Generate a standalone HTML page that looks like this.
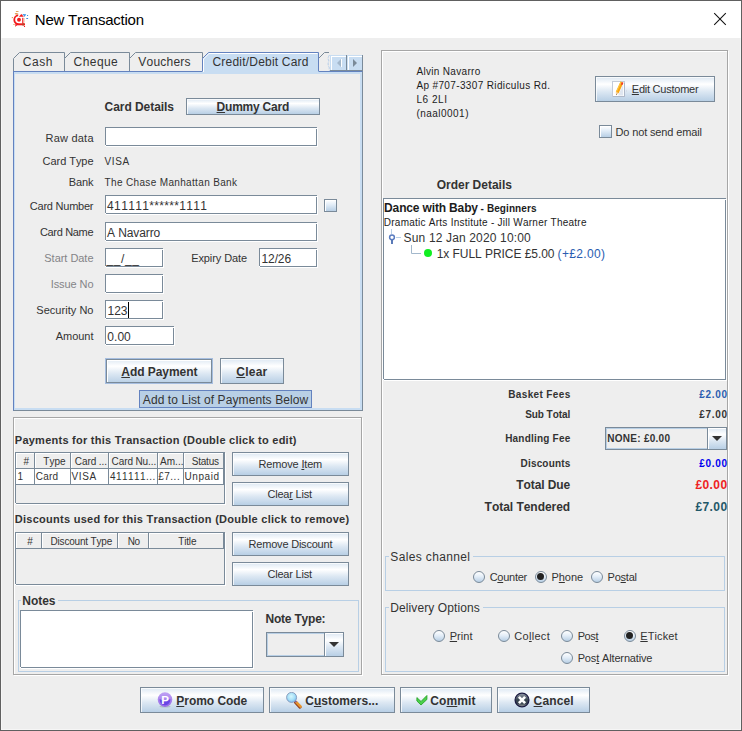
<!DOCTYPE html><html><head><meta charset="utf-8"><title>New Transaction</title><style>
html,body{margin:0;padding:0;}
body{width:742px;height:731px;overflow:hidden;background:#eee;font-family:"Liberation Sans",sans-serif;color:#333;font-kerning:none;font-feature-settings:"kern" 0,"liga" 0;}
#win{position:absolute;left:0;top:0;width:742px;height:731px;background:#eee;overflow:hidden;}
#win>*{position:absolute;}
#win>div{box-sizing:border-box;}
.a{position:absolute;display:block;}
.t{position:absolute;line-height:1;white-space:nowrap;}
.t u{text-decoration:underline;text-underline-offset:1px;text-decoration-thickness:1px;}
.btn{border:1px solid #7a8a99;background:linear-gradient(#dde8f3 0%,#fff 30%,#dde8f3 60%,#b8cfe5 100%);box-shadow:inset 1px 1px 0 rgba(255,255,255,.75);}
.dflt{border:1px solid #a6bee0;box-shadow:inset 0 0 0 1px #7a8a99, inset 2px 2px 0 #fff;}
.sbtn{border-right:1px solid #7a8a99;border-bottom:1px solid #7a8a99;background:#c8ddf2;box-shadow:inset 1px 1px 0 #c8ddf2, inset 2px 2px 0 #fff;}
.fld{border:1px solid #7a8a99;background:#fff;box-shadow:1px 1px 0 #fff;}
.chk{border:1px solid #7a8a99;background:linear-gradient(#fff 0%,#e4eef8 40%,#b8cfe5 100%);box-shadow:inset 1px 1px 0 #fff;}
.rad{border:1px solid #7a8a99;border-radius:50%;background:linear-gradient(#fff 0%,#e4eef8 45%,#b8cfe5 100%);}
.etch{border:1px solid #a6a6a6;box-shadow:inset 1px 1px 0 #fff, 1px 1px 0 #fff;}
.sp{border:1px solid #7a8a99;box-shadow:1px 1px 0 #fff;}
.th{border-right:1px solid #7a8a99;border-bottom:1px solid #7a8a99;box-shadow:inset 1px 1px 0 #fff;background:#eee;}
.combo{border:1px solid #7a8a99;background:#eee;box-shadow:inset 0 0 0 1px #b8cfe5;}
.cbtn{border-left:1px solid #7a8a99;background:linear-gradient(#dde8f3 0%,#fff 30%,#dde8f3 60%,#b8cfe5 100%);box-shadow:inset 1px 1px 0 #fff;}
</style></head><body><div id="win">
<div class="" style="left:0px;top:0px;width:742px;height:731px;border:1px solid #606060;box-shadow:inset 0 0 0 1px #f6f6f6"></div>
<div class="" style="left:1px;top:1px;width:740px;height:37px;background:#fff"></div>
<svg class="a" style="left:8px;top:6px" width="26" height="26" viewBox="0 0 26 26">
<path d="M10.2 9.4 A4 4.4 0 0 0 10.4 18.2" fill="none" stroke="#f21a1a" stroke-width="1.8"/>
<rect x="7.6" y="17.3" width="9.4" height="2" fill="#f21a1a"/>
<rect x="14.2" y="11.8" width="1.2" height="5.6" fill="#f21a1a"/>
<circle cx="11" cy="13.8" r="1.95" fill="#f21a1a"/>
<path d="M13.3 7.9 L15.9 10.8 L10.9 10.8Z" fill="#f21a1a"/>
<path d="M14.3 8 L18.2 8.2 L16.6 10.9 L15.6 9.6Z" fill="#2f8fe6" opacity=".9"/>
<rect x="19" y="9" width="1.1" height="1" fill="#3f8fe0"/>
<rect x="18.3" y="12" width="1.8" height=".9" fill="#2f7fd8"/>
<rect x="16.2" y="12" width=".8" height="4.6" fill="#f0c8a0" opacity=".8"/>
<rect x="7.9" y="5" width="2.6" height=".9" fill="#d9892e" opacity=".85"/>
<path d="M6.8 7.2 L9 6.9 L10.6 8 L9.2 8.8 L7 8.2Z" fill="#d9802a" opacity=".85"/>
<rect x="3.8" y="11" width="1.1" height="1.1" fill="#d98a30" opacity=".9"/>
<rect x="5" y="18.1" width="2" height=".8" fill="#e0a050" opacity=".8"/>
<rect x="7" y="20" width=".9" height=".9" fill="#e09a40" opacity=".8"/>
<rect x="7" y="18.4" width="2" height="1.6" fill="#f03050" opacity=".8"/>
<path d="M14.2 17.5 L16 17.2 L16 19.4 L14.4 19.6Z" fill="#b04a28"/>
<circle cx="16.5" cy="20.4" r=".6" fill="#f21a1a"/>
</svg>
<span class="t" style="top:12px;font-size:15px;color:#000;letter-spacing:-0.239px;left:34.8px;">New Transaction</span>
<svg class="a" style="left:713px;top:12px" width="14" height="14" viewBox="0 0 14 14"><path d="M1.2 1.2 L12.8 12.8 M12.8 1.2 L1.2 12.8" stroke="#111" stroke-width="1.05" fill="none"/></svg>
<div class="" style="left:13px;top:71px;width:350px;height:340px;box-sizing:border-box;border-left:1px solid #6382bf;border-top:1px solid #6382bf;border-right:1px solid #7a8a99;border-bottom:1px solid #7a8a99;"></div>
<div class="" style="left:14px;top:72px;width:348px;height:338px;box-sizing:border-box;border:2px solid #c8ddf2;border-left-width:1px;"></div>
<svg class="a" style="left:0;top:0" width="372" height="80" viewBox="0 0 372 80"><path d="M13.5 71 L13.5 58.5 L19.5 52.5 L64.5 52.5 L64.5 71Z" fill="#eeeeee" stroke="none"/><path d="M13.5 71 L13.5 58.5 L19.5 52.5 L64.5 52.5 L64.5 71" fill="none" stroke="#7a8a99" stroke-width="1"/><path d="M64.5 71 L64.5 58.5 L70.5 52.5 L129.5 52.5 L129.5 71Z" fill="#eeeeee" stroke="none"/><path d="M64.5 71 L64.5 58.5 L70.5 52.5 L129.5 52.5 L129.5 71" fill="none" stroke="#7a8a99" stroke-width="1"/><path d="M129.5 71 L129.5 58.5 L135.5 52.5 L202.5 52.5 L202.5 71Z" fill="#eeeeee" stroke="none"/><path d="M129.5 71 L129.5 58.5 L135.5 52.5 L202.5 52.5 L202.5 71" fill="none" stroke="#7a8a99" stroke-width="1"/><path d="M318.5 71 L318.5 58.5 L324.5 52.5 L329.5 52.5 L329.5 71Z" fill="#eeeeee" stroke="none"/><path d="M318.5 58.5 L324.5 52.5 L329 52.5" fill="none" stroke="#7a8a99" stroke-width="1"/><path d="M202.5 74 L202.5 58.5 L208.5 52.5 L318.5 52.5 L318.5 74Z" fill="#c8ddf2" stroke="none"/><path d="M202.5 71 L202.5 58.5 L208.5 52.5 L318.5 52.5 L318.5 71" fill="none" stroke="#6382bf" stroke-width="1"/><path d="M203.5 72 L203.5 59 L209 53.5 L317.5 53.5" fill="none" stroke="#fff" stroke-width="1"/></svg>
<span class="t" style="top:56px;font-size:12px;letter-spacing:0.561px;left:22.8px;">Cash</span>
<span class="t" style="top:56px;font-size:12px;letter-spacing:0.431px;left:73.6px;">Cheque</span>
<span class="t" style="top:56px;font-size:12px;letter-spacing:0.214px;left:138.3px;">Vouchers</span>
<span class="t" style="top:56px;font-size:12px;letter-spacing:0.206px;left:212.5px;">Credit/Debit Card</span>
<svg class="a" style="left:326px;top:52px" width="6" height="20" viewBox="0 0 6 20"><path d="M3.5 3 Q1 6 3 9 Q1 12 3.5 16 Q2.5 18 4 19" fill="none" stroke="#b4cdea" stroke-width="1" stroke-dasharray="3 1"/></svg>
<div class="sbtn" style="left:330px;top:55px;width:17px;height:16px;"></div>
<div class="sbtn" style="left:347px;top:55px;width:16px;height:16px;"></div>
<svg class="a" style="left:331px;top:55px" width="32" height="16" viewBox="0 0 32 16"><path d="M10 4 L10 12 L6 8Z" fill="#a3b8cc"/><rect x="10" y="4" width="1" height="8" fill="#fff"/><path d="M22 4 L22 12 L26 8Z" fill="#7a8a99"/></svg>
<span class="t" style="top:101px;font-size:12px;font-weight:bold;letter-spacing:-0.057px;left:104.6px;">Card Details</span>
<div class="btn" style="left:186px;top:98px;width:134px;height:17px;"></div>
<span class="t" style="top:101px;font-size:12px;font-weight:bold;letter-spacing:-0.223px;left:216.6px;"><u>D</u>ummy Card</span>
<span class="t" style="top:133px;font-size:11px;letter-spacing:0.202px;right:648.3px;">Raw data</span>
<div class="fld" style="left:105px;top:127px;width:212px;height:19px;"></div>
<div class="" style="left:316px;top:128px;width:1px;height:1px;background:#fff"></div>
<div class="" style="left:105px;top:145px;width:1px;height:1px;background:#fff"></div>
<span class="t" style="top:156px;font-size:11px;letter-spacing:-0.057px;right:648.56px;">Card Type</span>
<span class="t" style="top:157px;font-size:10px;letter-spacing:0.568px;left:104.6px;">VISA</span>
<span class="t" style="top:177px;font-size:11px;letter-spacing:-0.093px;right:648.59px;">Bank</span>
<span class="t" style="top:178px;font-size:10px;letter-spacing:0.342px;left:104.6px;">The Chase Manhattan Bank</span>
<span class="t" style="top:201px;font-size:11px;letter-spacing:-0.233px;right:648.73px;">Card Number</span>
<div class="fld" style="left:105px;top:195px;width:212px;height:19px;"></div>
<div class="" style="left:316px;top:196px;width:1px;height:1px;background:#fff"></div>
<div class="" style="left:105px;top:213px;width:1px;height:1px;background:#fff"></div>
<span class="t" style="top:200px;font-size:12px;letter-spacing:0.342px;left:107.1px;">411111******1111</span>
<div class="chk" style="left:324px;top:199px;width:13px;height:13px;"></div>
<span class="t" style="top:227px;font-size:11px;letter-spacing:-0.331px;right:648.83px;">Card Name</span>
<div class="fld" style="left:105px;top:222px;width:212px;height:19px;"></div>
<div class="" style="left:316px;top:223px;width:1px;height:1px;background:#fff"></div>
<div class="" style="left:105px;top:240px;width:1px;height:1px;background:#fff"></div>
<span class="t" style="top:227px;font-size:12px;letter-spacing:-0.116px;left:107.1px;">A Navarro</span>
<span class="t" style="top:253px;font-size:11px;color:#848488;letter-spacing:-0.037px;right:648.54px;">Start Date</span>
<div class="fld" style="left:105px;top:248px;width:58px;height:19px;"></div>
<div class="" style="left:162px;top:249px;width:1px;height:1px;background:#fff"></div>
<div class="" style="left:105px;top:266px;width:1px;height:1px;background:#fff"></div>
<span class="t" style="top:253px;font-size:12px;letter-spacing:0.567px;left:106.6px;">__/__</span>
<span class="t" style="top:253px;font-size:11px;letter-spacing:-0.096px;left:191.2px;">Expiry Date</span>
<div class="fld" style="left:259px;top:248px;width:58px;height:19px;"></div>
<div class="" style="left:316px;top:249px;width:1px;height:1px;background:#fff"></div>
<div class="" style="left:259px;top:266px;width:1px;height:1px;background:#fff"></div>
<span class="t" style="top:253px;font-size:12px;letter-spacing:-0.108px;left:261.5px;">12/26</span>
<span class="t" style="top:279px;font-size:11px;color:#848488;letter-spacing:-0.089px;right:648.59px;">Issue No</span>
<div class="fld" style="left:105px;top:274px;width:58px;height:19px;"></div>
<div class="" style="left:162px;top:275px;width:1px;height:1px;background:#fff"></div>
<div class="" style="left:105px;top:292px;width:1px;height:1px;background:#fff"></div>
<span class="t" style="top:305px;font-size:11px;letter-spacing:0.034px;right:648.47px;">Security No</span>
<div class="fld" style="left:105px;top:300px;width:58px;height:19px;"></div>
<div class="" style="left:162px;top:301px;width:1px;height:1px;background:#fff"></div>
<div class="" style="left:105px;top:318px;width:1px;height:1px;background:#fff"></div>
<span class="t" style="top:305px;font-size:12px;letter-spacing:-0.066px;left:107.6px;">123</span>
<div class="" style="left:128px;top:302px;width:1px;height:16px;background:#000"></div>
<span class="t" style="top:331px;font-size:11px;letter-spacing:-0.024px;right:648.52px;">Amount</span>
<div class="fld" style="left:105px;top:326px;width:69px;height:19px;"></div>
<div class="" style="left:173px;top:327px;width:1px;height:1px;background:#fff"></div>
<div class="" style="left:105px;top:344px;width:1px;height:1px;background:#fff"></div>
<span class="t" style="top:331px;font-size:12px;letter-spacing:0.047px;left:107.3px;">0.00</span>
<div class="btn dflt" style="left:105px;top:358px;width:108px;height:26px;"></div>
<span class="t" style="top:366px;font-size:12px;font-weight:bold;letter-spacing:-0.049px;left:121.3px;"><u>A</u>dd Payment</span>
<div class="btn" style="left:220px;top:358px;width:64px;height:26px;"></div>
<span class="t" style="top:366px;font-size:12px;font-weight:bold;letter-spacing:0.217px;left:236.3px;"><u>C</u>lear</span>
<div class="" style="left:139px;top:390px;width:173px;height:18px;box-sizing:border-box;background:#b8cfe5;border:1px solid #6382bf"></div>
<span class="t" style="top:394px;font-size:12px;letter-spacing:0.095px;left:142.8px;">Add to List of Payments Below</span>
<div class="etch" style="left:13px;top:417px;width:349px;height:258px;"></div>
<span class="t" style="top:434.5px;font-size:11px;font-weight:bold;letter-spacing:0.25px;left:14.8px;">Payments for this Transaction (Double click to edit)</span>
<div class="sp" style="left:15px;top:452px;width:210px;height:52px;"></div>
<div class="" style="left:224px;top:453px;width:1px;height:1px;background:#fff"></div>
<div class="" style="left:15px;top:503px;width:1px;height:1px;background:#fff"></div>
<div class="th" style="left:16px;top:453px;width:19px;height:16px;"></div>
<span class="t" style="top:457px;font-size:10px;letter-spacing:0px;left:23.5px;">#</span>
<div class="" style="left:16px;top:469px;width:18px;height:15px;background:#fff"></div>
<div class="" style="left:34px;top:469px;width:1px;height:16px;background:#7a8a99"></div>
<span class="t" style="top:472px;font-size:10px;left:17.6px;">1</span>
<div class="th" style="left:35px;top:453px;width:36px;height:16px;"></div>
<span class="t" style="top:457px;font-size:10px;letter-spacing:-0.011px;left:43.3px;">Type</span>
<div class="" style="left:35px;top:469px;width:35px;height:15px;background:#fff"></div>
<div class="" style="left:70px;top:469px;width:1px;height:16px;background:#7a8a99"></div>
<span class="t" style="top:472px;font-size:10px;letter-spacing:0.271px;left:35.7px;">Card</span>
<div class="th" style="left:71px;top:453px;width:38px;height:16px;"></div>
<span class="t" style="top:457px;font-size:10px;letter-spacing:-0.085px;left:74.8px;">Card ...</span>
<div class="" style="left:71px;top:469px;width:37px;height:15px;background:#fff"></div>
<div class="" style="left:108px;top:469px;width:1px;height:16px;background:#7a8a99"></div>
<span class="t" style="top:472px;font-size:10px;letter-spacing:0.601px;left:71.6px;">VISA</span>
<div class="th" style="left:109px;top:453px;width:49px;height:16px;"></div>
<span class="t" style="top:457px;font-size:10px;letter-spacing:-0.109px;left:111.6px;">Card Nu...</span>
<div class="" style="left:109px;top:469px;width:48px;height:15px;background:#fff"></div>
<div class="" style="left:157px;top:469px;width:1px;height:16px;background:#7a8a99"></div>
<span class="t" style="top:472px;font-size:10px;letter-spacing:0.423px;left:110.1px;">411111...</span>
<div class="th" style="left:158px;top:453px;width:26px;height:16px;"></div>
<span class="t" style="top:457px;font-size:10px;letter-spacing:0.014px;left:160.1px;">Am...</span>
<div class="" style="left:158px;top:469px;width:25px;height:15px;background:#fff"></div>
<div class="" style="left:183px;top:469px;width:1px;height:16px;background:#7a8a99"></div>
<span class="t" style="top:472px;font-size:10px;letter-spacing:0.508px;left:158.2px;">£7...</span>
<div class="th" style="left:184px;top:453px;width:41px;height:16px;"></div>
<span class="t" style="top:457px;font-size:10px;letter-spacing:-0.232px;left:191.8px;">Status</span>
<div class="" style="left:184px;top:469px;width:40px;height:15px;background:#fff"></div>
<div class="" style="left:224px;top:469px;width:1px;height:16px;background:#7a8a99"></div>
<span class="t" style="top:472px;font-size:10px;letter-spacing:0.539px;left:184.6px;">Unpaid</span>
<div class="" style="left:16px;top:484px;width:209px;height:1px;background:#7a8a99"></div>
<div class="" style="left:223px;top:453px;width:1px;height:32px;background:#7a8a99"></div>
<div class="btn" style="left:232px;top:452px;width:117px;height:24px;"></div>
<span class="t" style="top:459px;font-size:11px;letter-spacing:-0.174px;left:258.6px;">Remove <u>I</u>tem</span>
<div class="btn" style="left:232px;top:482px;width:117px;height:24px;"></div>
<span class="t" style="top:489px;font-size:11px;letter-spacing:-0.198px;left:267.4px;">Clea<u>r</u> List</span>
<span class="t" style="top:514px;font-size:11px;font-weight:bold;letter-spacing:0.269px;left:14.8px;">Discounts used for this Transaction (Double click to remove)</span>
<div class="sp" style="left:15px;top:532px;width:210px;height:53px;"></div>
<div class="" style="left:224px;top:533px;width:1px;height:1px;background:#fff"></div>
<div class="" style="left:15px;top:584px;width:1px;height:1px;background:#fff"></div>
<div class="th" style="left:16px;top:533px;width:26px;height:16px;"></div>
<span class="t" style="top:537px;font-size:10px;letter-spacing:0px;left:27.3px;">#</span>
<div class="th" style="left:42px;top:533px;width:76px;height:16px;"></div>
<span class="t" style="top:537px;font-size:10px;letter-spacing:-0.185px;left:50.5px;">Discount Type</span>
<div class="th" style="left:118px;top:533px;width:31px;height:16px;"></div>
<span class="t" style="top:537px;font-size:10px;letter-spacing:-0.397px;left:127.7px;">No</span>
<div class="th" style="left:149px;top:533px;width:76px;height:16px;"></div>
<span class="t" style="top:537px;font-size:10px;letter-spacing:-0.177px;left:178.3px;">Title</span>
<div class="" style="left:223px;top:533px;width:1px;height:16px;background:#7a8a99"></div>
<div class="btn" style="left:232px;top:532px;width:117px;height:24px;"></div>
<span class="t" style="top:539px;font-size:11px;letter-spacing:-0.209px;left:248.6px;">Remove Discount</span>
<div class="btn" style="left:232px;top:562px;width:117px;height:24px;"></div>
<span class="t" style="top:569px;font-size:11px;letter-spacing:-0.197px;left:267.4px;">Clear List</span>
<div class="" style="left:18px;top:600px;width:341px;height:72px;box-sizing:border-box;border:1px solid #b8cfe5"></div>
<div class="" style="left:21px;top:594px;width:37px;height:14px;background:#eee"></div>
<span class="t" style="top:595px;font-size:12px;font-weight:bold;letter-spacing:-0.036px;left:22.3px;">Notes</span>
<div class="sp" style="left:20px;top:610px;width:233px;height:58px;background:#fff"></div>
<div class="" style="left:252px;top:611px;width:1px;height:1px;background:#fff"></div>
<div class="" style="left:20px;top:667px;width:1px;height:1px;background:#fff"></div>
<span class="t" style="top:612.6px;font-size:12px;font-weight:bold;letter-spacing:-0.213px;left:265.5px;">Note Type:</span>
<div class="combo" style="left:266px;top:632px;width:78px;height:25px;"></div>
<div class="cbtn" style="left:324px;top:633px;width:19px;height:23px;"></div>
<svg class="a" style="left:329px;top:642px" width="10" height="5" viewBox="0 0 10 5"><path d="M0 0 L10 0 L5 5Z" fill="#333"/></svg>
<div class="etch" style="left:381px;top:50px;width:347px;height:625px;"></div>
<span class="t" style="top:67px;font-size:10px;color:#1c1c1c;letter-spacing:0.322px;left:416.4px;">Alvin Navarro</span>
<span class="t" style="top:81px;font-size:10px;color:#1c1c1c;letter-spacing:0.363px;left:416.4px;">Ap #707-3307 Ridiculus Rd.</span>
<span class="t" style="top:95px;font-size:10px;color:#1c1c1c;letter-spacing:0.557px;left:416.4px;">L6 2LI</span>
<span class="t" style="top:109px;font-size:10px;color:#1c1c1c;letter-spacing:0.476px;left:416.4px;">(naal0001)</span>
<div class="btn" style="left:595px;top:76px;width:120px;height:26px;"></div>
<svg class="a" style="left:611px;top:80px" width="16" height="18" viewBox="0 0 16 18">
<rect x="1.5" y="1.5" width="12" height="15" fill="#fff" stroke="#c3cbd9" stroke-width="1"/>
<path d="M13.5 3 L13.5 16.5 L2 16.5" fill="none" stroke="#aeb8c8" stroke-width="1"/>
<path d="M12.2 4.5 L12.2 15.5 L7 15.5Z" fill="#dfe6f0"/>
<path d="M9.6 1.6 L12.4 2.8 L7.6 13.2 L4.8 12Z" fill="#f7a313"/>
<path d="M9.6 1.6 L10.6 2 L5.8 12.4 L4.8 12Z" fill="#ffc53a"/>
<path d="M10.9 2.2 L12.4 2.8 L11.4 5 L9.9 4.4Z" fill="#ef3030"/>
<path d="M4.8 12 L7.6 13.2 L5 15.2Z" fill="#efc99a"/>
<path d="M5.2 14 L5.9 14.4 L5 15.2Z" fill="#5a3a1a"/>
<path d="M15 9.5 L15 12.5 L16 11Z" fill="#cfd8e4"/>
</svg>
<span class="t" style="top:84px;font-size:11px;letter-spacing:-0.242px;left:631.8px;"><u>E</u>dit Customer</span>
<div class="chk" style="left:599px;top:125px;width:13px;height:13px;"></div>
<span class="t" style="top:127px;font-size:11px;letter-spacing:-0.142px;left:615.5px;">Do not send email</span>
<span class="t" style="top:179px;font-size:12px;font-weight:bold;letter-spacing:-0.015px;left:436.7px;">Order Details</span>
<div class="sp" style="left:383px;top:198px;width:343px;height:182px;background:#fff"></div>
<div class="" style="left:725px;top:199px;width:1px;height:1px;background:#fff"></div>
<div class="" style="left:383px;top:379px;width:1px;height:1px;background:#fff"></div>
<span class="t" style="top:201.6px;font-size:12px;font-weight:bold;color:#1c1c1c;letter-spacing:-0.152px;left:384.1px;">Dance with Baby</span>
<span class="t" style="top:203.6px;font-size:10px;font-weight:bold;color:#1c1c1c;letter-spacing:0.088px;left:480.6px;">- Beginners</span>
<span class="t" style="top:218px;font-size:10px;color:#1c1c1c;letter-spacing:0.25px;left:383.8px;">Dramatic Arts Institute - Jill Warner Theatre</span>
<span class="t" style="top:232.2px;font-size:12px;letter-spacing:0.15px;left:403.6px;">Sun 12 Jan 2020 10:00</span>
<span class="t" style="top:248px;font-size:12px;letter-spacing:-0.052px;left:436.7px;">1x FULL PRICE £5.00</span>
<span class="t" style="top:248px;font-size:12px;color:#2a5db0;letter-spacing:0.338px;left:557.6px;">(+£2.00)</span>
<svg class="a" style="left:386px;top:228px" width="50" height="32" viewBox="0 0 50 32">
<path d="M5.5 1 L5.5 6" stroke="#b8cfe5" stroke-width="1"/>
<path d="M10 9.5 L15 9.5" stroke="#b8cfe5" stroke-width="1"/>
<circle cx="6" cy="9.3" r="2.4" fill="#fff" stroke="#5a7cc0" stroke-width="1.5"/>
<path d="M6 12 L6 16" stroke="#4a6cb0" stroke-width="1.8"/>
<path d="M25.5 17 L25.5 25.5 L35 25.5" fill="none" stroke="#a3b8cc" stroke-width="1"/>
<circle cx="42" cy="25" r="4" fill="#11ee22"/>
</svg>
<span class="t" style="top:390px;font-size:10px;font-weight:bold;letter-spacing:0.353px;right:171.45px;">Basket Fees</span>
<span class="t" style="top:390px;font-size:10px;font-weight:bold;color:#2a5db0;letter-spacing:0.692px;right:14.21px;">£2.00</span>
<span class="t" style="top:410px;font-size:10px;font-weight:bold;letter-spacing:-0.07px;right:171.87px;">Sub Total</span>
<span class="t" style="top:410px;font-size:10px;font-weight:bold;color:#333;letter-spacing:0.692px;right:14.21px;">£7.00</span>
<span class="t" style="top:434px;font-size:10px;font-weight:bold;letter-spacing:0.209px;right:171.59px;">Handling Fee</span>
<div class="combo" style="left:605px;top:427px;width:122px;height:23px;"></div>
<div class="cbtn" style="left:707px;top:428px;width:19px;height:21px;"></div>
<svg class="a" style="left:712px;top:436px" width="10" height="5" viewBox="0 0 10 5"><path d="M0 0 L10 0 L5 5Z" fill="#333"/></svg>
<span class="t" style="top:434px;font-size:10px;font-weight:bold;letter-spacing:0.267px;left:607.3px;">NONE: £0.00</span>
<span class="t" style="top:459px;font-size:10px;font-weight:bold;letter-spacing:0.157px;right:171.64px;">Discounts</span>
<span class="t" style="top:459px;font-size:10px;font-weight:bold;color:#0000ee;letter-spacing:0.692px;right:14.21px;">£0.00</span>
<span class="t" style="top:479px;font-size:12px;font-weight:bold;letter-spacing:-0.096px;right:171.9px;">Total Due</span>
<span class="t" style="top:479px;font-size:12px;font-weight:bold;color:#ee2222;letter-spacing:0.417px;right:14.48px;">£0.00</span>
<span class="t" style="top:501px;font-size:12px;font-weight:bold;letter-spacing:-0.032px;right:171.83px;">Total Tendered</span>
<span class="t" style="top:501px;font-size:12px;font-weight:bold;color:#1f5868;letter-spacing:0.417px;right:14.48px;">£7.00</span>
<div class="" style="left:385px;top:556px;width:340px;height:35px;box-sizing:border-box;border:1px solid #b8cfe5"></div>
<div class="" style="left:389px;top:550px;width:84px;height:14px;background:#eee"></div>
<span class="t" style="top:551.3px;font-size:12px;letter-spacing:0.359px;left:390.3px;">Sales channel</span>
<div class="rad" style="left:473px;top:571px;width:12px;height:12px;"></div>
<span class="t" style="top:572px;font-size:11px;letter-spacing:-0.276px;left:489.7px;">C<u>o</u>unter</span>
<div class="rad" style="left:535px;top:571px;width:12px;height:12px;"></div>
<div class="" style="left:537px;top:573px;width:7px;height:7px;background:#222;border-radius:50%"></div>
<span class="t" style="top:572px;font-size:11px;letter-spacing:-0.057px;left:551.5px;">P<u>h</u>one</span>
<div class="rad" style="left:591px;top:571px;width:12px;height:12px;"></div>
<span class="t" style="top:572px;font-size:11px;letter-spacing:-0.239px;left:607.6px;">Po<u>s</u>tal</span>
<div class="" style="left:385px;top:607px;width:340px;height:65px;box-sizing:border-box;border:1px solid #b8cfe5"></div>
<div class="" style="left:389px;top:601px;width:94px;height:14px;background:#eee"></div>
<span class="t" style="top:602px;font-size:12px;letter-spacing:0.098px;left:390.3px;">Delivery Options</span>
<div class="rad" style="left:433px;top:630px;width:12px;height:12px;"></div>
<span class="t" style="top:631px;font-size:11px;letter-spacing:0.044px;left:449.7px;"><u>P</u>rint</span>
<div class="rad" style="left:498px;top:630px;width:12px;height:12px;"></div>
<span class="t" style="top:631px;font-size:11px;letter-spacing:0.293px;left:514.3px;">Co<u>l</u>lect</span>
<div class="rad" style="left:561px;top:630px;width:12px;height:12px;"></div>
<span class="t" style="top:631px;font-size:11px;letter-spacing:-0.41px;left:577.7px;">Pos<u>t</u></span>
<div class="rad" style="left:624px;top:630px;width:12px;height:12px;"></div>
<div class="" style="left:626px;top:632px;width:7px;height:7px;background:#222;border-radius:50%"></div>
<span class="t" style="top:631px;font-size:11px;letter-spacing:0.085px;left:640.3px;"><u>E</u>Ticket</span>
<div class="rad" style="left:561px;top:652px;width:12px;height:12px;"></div>
<span class="t" style="top:653px;font-size:11px;letter-spacing:-0.151px;left:577.7px;">Pos<u>t</u> Alternative</span>
<div class="btn" style="left:140px;top:687px;width:124px;height:26px;"></div>
<svg class="a" style="left:157px;top:692px" width="16" height="16" viewBox="0 0 16 16">
<defs><linearGradient id="pg" x1="0" y1="0" x2="0" y2="1"><stop offset="0" stop-color="#bfa2f4"/><stop offset="1" stop-color="#9568e6"/></linearGradient></defs>
<ellipse cx="8" cy="14.6" rx="5.5" ry="1" fill="#7a8a7a" opacity=".35"/>
<circle cx="8" cy="7.6" r="7.3" fill="url(#pg)"/>
<path d="M2.7 6.9 Q8 11 13.3 6.9 A5.4 5.4 0 1 1 2.7 6.9Z" fill="#5a3ae2" opacity=".8"/>
<text x="4.3" y="12" font-family="Liberation Sans, sans-serif" font-weight="bold" font-size="11.5" fill="#fff">P</text></svg>
<span class="t" style="top:695px;font-size:12px;font-weight:bold;letter-spacing:-0.04px;left:176.3px;"><u>P</u>romo Code</span>
<div class="btn" style="left:269px;top:687px;width:126px;height:26px;"></div>
<svg class="a" style="left:286px;top:692px" width="17" height="17" viewBox="0 0 17 17">
<defs><radialGradient id="lg" cx="45%" cy="40%" r="60%"><stop offset="0" stop-color="#d6f7fc"/><stop offset=".6" stop-color="#a8e0f8"/><stop offset="1" stop-color="#78bdf2"/></radialGradient></defs>
<path d="M9.6 10.4 L14 15.2" stroke="#8a3a1c" stroke-width="3" stroke-linecap="round"/>
<path d="M10 9.8 L14.6 14.6" stroke="#e8932a" stroke-width="2.6" stroke-linecap="round"/>
<path d="M9 8.8 L10.4 10.2" stroke="#7a5aa8" stroke-width="1.6"/>
<circle cx="5.6" cy="5.4" r="5" fill="url(#lg)" stroke="#8497b8" stroke-width=".9"/></svg>
<span class="t" style="top:695px;font-size:12px;font-weight:bold;letter-spacing:0.035px;left:305.2px;">C<u>u</u>stomers...</span>
<div class="btn" style="left:400px;top:687px;width:92px;height:26px;"></div>
<svg class="a" style="left:416px;top:695px" width="12" height="11" viewBox="0 0 12 11"><path d="M0.9 2.6 L5 6.5 L10.9 0.5 L10.9 4.5 L5 10 L0.9 6Z" fill="#4ad04a" stroke="#2aa62a" stroke-width=".9" stroke-linejoin="round"/></svg>
<span class="t" style="top:695px;font-size:12px;font-weight:bold;letter-spacing:0.106px;left:430.3px;">Co<u>m</u>mit</span>
<div class="btn" style="left:497px;top:687px;width:93px;height:26px;"></div>
<svg class="a" style="left:514px;top:692px" width="16" height="16" viewBox="0 0 16 16">
<defs><linearGradient id="cg" x1="0" y1="0" x2="0" y2="1"><stop offset="0" stop-color="#9aa0ae"/><stop offset=".5" stop-color="#36434e"/><stop offset=".75" stop-color="#3c4852"/><stop offset="1" stop-color="#a0a0a0"/></linearGradient></defs>
<circle cx="8" cy="8" r="6.9" fill="url(#cg)" stroke="#1c1c42" stroke-width="1.3"/>
<path d="M4.9 4.9 L11.1 11.1 M11.1 4.9 L4.9 11.1" stroke="#fff" stroke-width="2.7" stroke-linecap="butt"/></svg>
<span class="t" style="top:695px;font-size:12px;font-weight:bold;letter-spacing:0.128px;left:533.6px;"><u>C</u>ancel</span>
</div></body></html>
